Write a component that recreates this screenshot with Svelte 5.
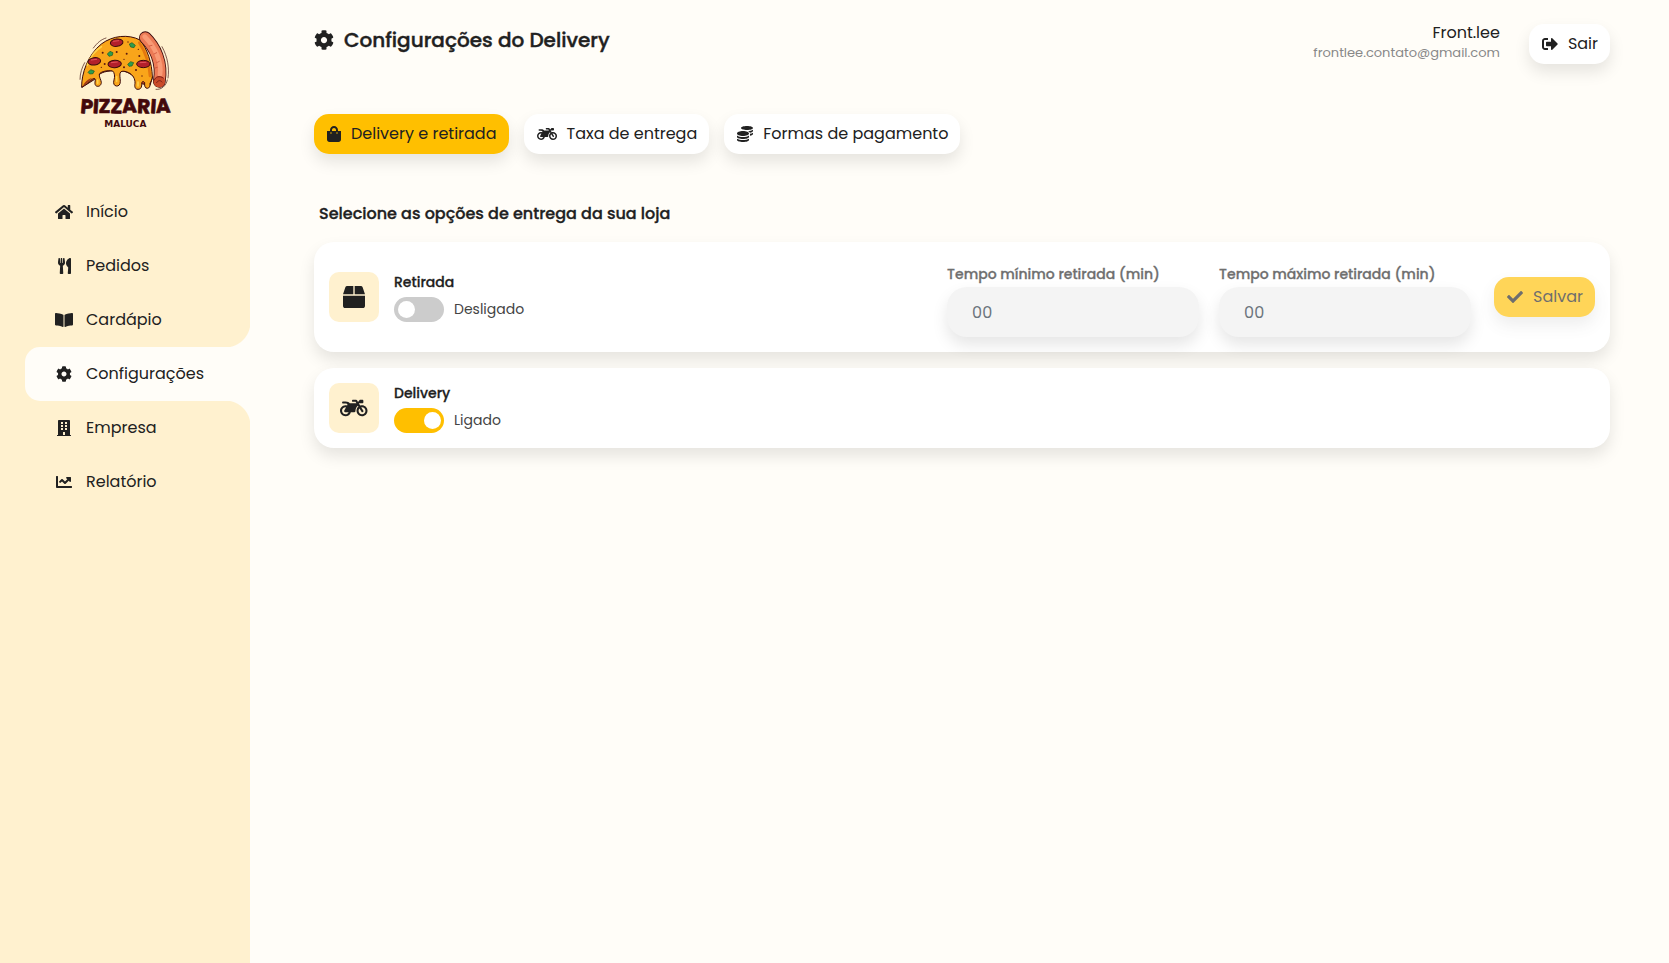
<script>
  const icons = {
    home: { w: 576, d: 'M280.37 148.26L96 300.11V464a16 16 0 0 0 16 16l112.06-.29a16 16 0 0 0 15.92-16V368a16 16 0 0 1 16-16h64a16 16 0 0 1 16 16v95.64a16 16 0 0 0 16 16.05L464 480a16 16 0 0 0 16-16V300L295.67 148.26a12.19 12.19 0 0 0-15.3 0zM571.6 251.47L488 182.56V44.05a12 12 0 0 0-12-12h-56a12 12 0 0 0-12 12v72.61L318.47 43a48 48 0 0 0-61 0L4.34 251.47a12 12 0 0 0-1.6 16.9l25.5 31A12 12 0 0 0 45.15 301l235.22-193.74a12.19 12.19 0 0 1 15.3 0L530.9 301a12 12 0 0 0 16.9-1.6l25.5-31a12 12 0 0 0-1.7-16.93z' },
    utensils: { w: 416, d: 'M207.9 15.2c.8 4.7 16.1 94.5 16.1 128.8 0 52.3-27.8 89.6-68.9 104.6L168 486.7c.7 13.7-10.2 25.3-24 25.3H80c-13.7 0-24.7-11.5-24-25.3l12.9-238.1C27.7 233.6 0 196.2 0 144 0 109.6 15.3 19.9 16.1 15.2 19.3-5.1 61.4-5.4 64 16.3v141.2c1.3 3.4 15.1 3.2 16 0 1.4-25.3 7.9-139.2 8-141.8 3.3-20.8 44.7-20.8 47.9 0 .2 2.7 6.6 116.5 8 141.8.9 3.2 14.8 3.4 16 0V16.3c2.6-21.6 44.8-21.4 48-1.1zm119.2 285.7l-15 185.1c-1.2 14 9.9 26 23.9 26h56c13.3 0 24-10.7 24-24V24c0-13.2-10.7-24-24-24-82.5 0-221.4 178.5-64.9 300.9z' },
    book: { w: 576, d: 'M542.22 32.05c-54.8 3.11-163.72 14.43-230.96 55.59-4.64 2.84-7.27 7.89-7.27 13.17v363.87c0 11.55 12.63 18.85 23.28 13.49 69.18-34.82 169.23-44.32 218.7-46.92 16.89-.89 30.02-14.43 30.02-30.66V62.75c.01-17.71-15.35-31.74-33.77-30.7zM264.73 87.64C197.5 46.48 88.58 35.17 33.78 32.05 15.36 31.01 0 45.04 0 62.75V400.6c0 16.24 13.13 29.78 30.02 30.66 49.49 2.6 149.59 12.11 218.77 46.95 10.62 5.35 23.21-1.94 23.21-13.46V100.63c0-5.29-2.62-10.14-7.27-12.99z' },
    cog: { w: 512, d: 'M487.4 315.7l-42.6-24.6c4.3-23.2 4.3-47 0-70.2l42.6-24.6c4.9-2.8 7.1-8.6 5.5-14-11.1-35.6-30-67.8-54.7-94.6-3.8-4.1-10-5.1-14.8-2.3L380.8 110c-17.9-15.4-38.5-27.3-60.8-35.1V25.8c0-5.6-3.9-10.5-9.4-11.7-36.7-8.2-74.3-7.8-109.2 0-5.5 1.2-9.4 6.1-9.4 11.7V75c-22.2 7.9-42.8 19.8-60.8 35.1L88.7 85.5c-4.9-2.8-11-1.9-14.8 2.3-24.7 26.7-43.6 58.9-54.7 94.6-1.7 5.4.6 11.2 5.5 14L67.3 221c-4.3 23.2-4.3 47 0 70.2l-42.6 24.6c-4.9 2.8-7.1 8.6-5.5 14 11.1 35.6 30 67.8 54.7 94.6 3.8 4.1 10 5.1 14.8 2.3l42.6-24.6c17.9 15.4 38.5 27.3 60.8 35.1v49.2c0 5.6 3.9 10.5 9.4 11.7 36.7 8.2 74.3 7.8 109.2 0 5.5-1.2 9.4-6.1 9.4-11.7v-49.2c22.2-7.9 42.8-19.8 60.8-35.1l42.6 24.6c4.9 2.8 11 1.9 14.8-2.3 24.7-26.7 43.6-58.9 54.7-94.6 1.5-5.5-.7-11.3-5.6-14.1zM256 336c-44.1 0-80-35.9-80-80s35.9-80 80-80 80 35.9 80 80-35.9 80-80 80z' },
    building: { w: 448, d: 'M436 480h-20V24c0-13.3-10.7-24-24-24H56C42.7 0 32 10.7 32 24v456H12c-6.6 0-12 5.4-12 12v20h448v-20c0-6.6-5.4-12-12-12zM128 76c0-6.6 5.4-12 12-12h40c6.6 0 12 5.4 12 12v40c0 6.6-5.4 12-12 12h-40c-6.6 0-12-5.4-12-12zm0 96c0-6.6 5.4-12 12-12h40c6.6 0 12 5.4 12 12v40c0 6.6-5.4 12-12 12h-40c-6.6 0-12-5.4-12-12zm52 148h-40c-6.6 0-12-5.4-12-12v-40c0-6.6 5.4-12 12-12h40c6.6 0 12 5.4 12 12v40c0 6.6-5.4 12-12 12zm76 160h-64v-84c0-6.6 5.4-12 12-12h40c6.6 0 12 5.4 12 12zm64-172c0 6.6-5.4 12-12 12h-40c-6.6 0-12-5.4-12-12v-40c0-6.6 5.4-12 12-12h40c6.6 0 12 5.4 12 12zm0-96c0 6.6-5.4 12-12 12h-40c-6.6 0-12-5.4-12-12v-40c0-6.6 5.4-12 12-12h40c6.6 0 12 5.4 12 12zm0-96c0 6.6-5.4 12-12 12h-40c-6.6 0-12-5.4-12-12V76c0-6.6 5.4-12 12-12h40c6.6 0 12 5.4 12 12z' },
    chart: { w: 512, d: 'M496 384H64V80c0-8.84-7.16-16-16-16H16C7.16 64 0 71.16 0 80v336c0 17.67 14.33 32 32 32h464c8.84 0 16-7.16 16-16v-32c0-8.84-7.16-16-16-16zM464 96H345.94c-21.38 0-32.09 25.85-16.97 40.97l32.4 32.4L288 242.75l-73.37-73.37c-12.5-12.5-32.76-12.5-45.25 0l-68.69 68.69c-6.25 6.25-6.25 16.38 0 22.63l22.62 22.62c6.25 6.25 16.38 6.25 22.63 0L192 237.25l73.37 73.37c12.5 12.5 32.76 12.5 45.25 0l96-96 32.4 32.4c15.12 15.12 40.97 4.41 40.97-16.97V112c.01-8.84-7.15-16-15.99-16z' },
    bag: { w: 448, d: 'M352 160v-32C352 57.42 294.579 0 224 0 153.42 0 96 57.42 96 128v32H0v272c0 44.183 35.817 80 80 80h288c44.183 0 80-35.817 80-80V160h-96zm-192-32c0-35.29 28.71-64 64-64s64 28.71 64 64v32H160v-32zm160 120c-13.255 0-24-10.745-24-24s10.745-24 24-24 24 10.745 24 24-10.745 24-24 24zm-192 0c-13.255 0-24-10.745-24-24s10.745-24 24-24 24 10.745 24 24-10.745 24-24 24z' },
    moto: { w: 640, d: 'M512.9 192c-14.9-.1-29.1 2.3-42.4 6.9L437.6 144H520c13.3 0 24-10.7 24-24V88c0-13.3-10.7-24-24-24h-45.3c-6.8 0-13.3 2.9-17.8 7.9l-37.5 41.7-22.8-38C392.2 68.4 384.4 64 376 64h-80c-8.8 0-16 7.2-16 16v16c0 8.8 7.2 16 16 16h66.4l19.2 32H227.9c-17.7-23.1-44.9-40-99.9-40H72.5C59 104 47.7 115 48 128.5c.2 13 10.9 23.5 24 23.5h56c24.5 0 38.7 10.9 47.8 24.8l-11.3 20.5c-13-3.9-26.9-5.7-41.3-5.2C55.9 194.5 1.6 249.6 0 317c-1.6 72.1 56.3 131 128 131 59.6 0 109.7-40.8 124-96h84.2c13.7 0 24.6-11.4 24-25.1-2.1-47.1 17.5-93.7 56.2-125l12.5 20.8c-27.6 23.7-45.1 58.9-44.8 98.2.5 69.6 57.2 126.5 126.8 127.1 71.6.7 129.8-57.5 129.2-129.1-.7-69.6-57.6-126.4-127.2-126.9zM128 400c-44.1 0-80-35.9-80-80s35.9-80 80-80c4.2 0 8.4.3 12.5 1L99 316.4c-8.8 16 2.8 35.6 21 35.6h81.3c-12.4 28.2-40.6 48-73.3 48zm463.9-75.6c-2.2 40.6-35 73.4-75.5 75.5-46.1 2.5-84.4-34.3-84.4-79.9 0-21.4 8.4-40.8 22.1-55.1l49.4 82.4c4.5 7.6 14.4 10 22 5.5l13.7-8.2c7.6-4.5 10-14.4 5.5-22l-48.6-80.9c5.2-1.1 10.5-1.6 15.9-1.6 45.6-.1 82.3 38.2 79.9 84.3z' },
    coins: { w: 512, d: 'M0 405.3V448c0 35.3 86 64 192 64s192-28.7 192-64v-42.7C342.7 434.4 267.2 448 192 448S41.3 434.4 0 405.3zM320 128c106 0 192-28.7 192-64S426 0 320 0 128 28.7 128 64s86 64 192 64zM0 300.4V352c0 35.3 86 64 192 64s192-28.7 192-64v-51.6c-41.3 34-116.9 51.6-192 51.6S41.3 334.4 0 300.4zm416 11c57.3-11.1 96-31.7 96-55.4v-42.7c-23.2 16.4-57.3 27.6-96 34.5v63.6zM192 160C86 160 0 195.8 0 240s86 80 192 80 192-35.8 192-80-86-80-192-80zm219.3 56.3c60-10.8 100.7-32 100.7-56.3v-42.7c-35.5 25.1-96.5 38.6-160.7 41.8 29.5 14.3 51.2 33.5 60 57.2z' },
    exit: { w: 512, d: 'M497 273L329 441c-15 15-41 4.5-41-17v-96H152c-13.3 0-24-10.7-24-24v-96c0-13.3 10.7-24 24-24h136V88c0-21.4 25.9-32 41-17l168 168c9.3 9.4 9.3 24.6 0 34zM192 436v-40c0-6.6-5.4-12-12-12H96c-17.7 0-32-14.3-32-32V160c0-17.7 14.3-32 32-32h84c6.6 0 12-5.4 12-12V76c0-6.6-5.4-12-12-12H96c-53 0-96 43-96 96v192c0 53 43 96 96 96h84c6.6 0 12-5.4 12-12z' },
    check: { w: 512, d: 'M173.898 439.404l-166.4-166.4c-9.997-9.997-9.997-26.206 0-36.204l36.203-36.204c9.997-9.998 26.207-9.998 36.204 0L192 312.69 432.095 72.596c9.997-9.997 26.207-9.997 36.204 0l36.203 36.204c9.997 9.997 9.997 26.206 0 36.204l-294.4 294.401c-9.998 9.997-26.207 9.997-36.204-.001z' },
    box: { w: 512, d: 'M509.5 184.6L458.9 32.8C452.4 13.2 434.1 0 413.4 0H272v192h238.7c-.4-2.5-.4-5-1.2-7.4zM240 0H98.6c-20.7 0-39 13.2-45.5 32.8L2.5 184.6c-.8 2.4-.8 4.9-1.2 7.4H240V0zM0 224v240c0 26.5 21.5 48 48 48h416c26.5 0 48-21.5 48-48V224H0z' }
  };

  const menu = [
    { label: 'Início', icon: 'home' },
    { label: 'Pedidos', icon: 'utensils' },
    { label: 'Cardápio', icon: 'book' },
    { label: 'Configurações', icon: 'cog', active: true },
    { label: 'Empresa', icon: 'building' },
    { label: 'Relatório', icon: 'chart' }
  ];

  const tabs = [
    { label: 'Delivery e retirada', icon: 'bag' },
    { label: 'Taxa de entrega', icon: 'moto' },
    { label: 'Formas de pagamento', icon: 'coins' }
  ];

  let activeTab = $state(0);
  let pickup = $state(false);
  let delivery = $state(true);
</script>

{#snippet icon(name)}
  <svg class="icon" viewBox="0 0 {icons[name].w} 512" aria-hidden="true"><path d={icons[name].d} /></svg>
{/snippet}

<div class="layout">
  <aside class="sidebar">
    <svg class="logo" viewBox="0 0 390 360" role="img" aria-label="Pizzaria Maluca">
      <g fill="none" stroke="#3b0a0c" stroke-width="2" stroke-linecap="round">
        <path d="M60 178C60 160 66 142 74 128M100 84C112 68 124 58 138 54" />
        <path d="M306 80C324 112 328 146 324 174M322 180C318 198 304 210 288 208" />
      </g>
      <path fill="#b8481f" stroke="#3b0a0c" stroke-width="3" stroke-linejoin="round"
        d="M66 202C70 164 96 148 120 146C150 138 200 138 232 152L278 170L270 196L238 190C218 158 190 148 160 152C132 154 118 158 104 178Z" />
      <path fill="#f9a51a" stroke="#3b0a0c" stroke-width="3" stroke-linejoin="round"
        d="M65 202C64 160 84 104 124 72C158 46 206 42 240 60C262 86 276 130 277 170C276 180 272 186 270 190C271 198 268 205 262 205C255 205 253 198 254 188C250 182 246 184 245 190C246 202 242 208 234 208C225 208 223 200 225 190C226 176 218 164 206 158C196 153 186 152 182 156C177 162 181 174 181 184C181 194 176 199 169 198C162 197 159 190 162 180C165 170 164 158 158 153C144 150 124 154 118 162C116 170 124 180 124 188C123 197 116 201 109 198C102 194 106 184 106 178C104 172 94 178 88 186Z" />
      <path fill="#a33c18" d="M68 200C72 188 82 178 96 174L86 186Z" />
      <path fill="none" stroke="#ffd24a" stroke-width="5" stroke-linecap="round"
        d="M82 136C92 108 106 90 124 80M170 170V184M234 186V198M113 180V190" />
      <path fill="none" stroke="#e5780f" stroke-width="8" stroke-linecap="round"
        d="M238 68C256 96 268 128 270 168" />
      <g fill="none" stroke-linecap="round">
        <path stroke="#3b0a0c" stroke-width="38" d="M256 53C284 80 308 126 298 184" />
        <path stroke="#ec7a55" stroke-width="33" d="M256 53C284 80 308 126 298 184" />
        <path stroke="#f99a75" stroke-width="14" d="M254 50C286 82 306 126 300 164" />
        <path stroke="#c2452f" stroke-width="2" d="M268 78L276 76M282 102L290 98M290 128L298 124M286 144L292 142" />
      </g>
      <circle cx="298" cy="185" r="17" fill="#c94a2a" />
      <path d="M283 180C286 170 298 166 310 174M290 188C294 180 302 180 306 186" fill="none" stroke="#7d1f16" stroke-width="3" stroke-linecap="round" />
      <g fill="#b31f2b" stroke="#3b0a0c" stroke-width="3">
        <ellipse cx="170" cy="68" rx="19" ry="11" transform="rotate(-8 170 68)" />
        <ellipse cx="103" cy="124" rx="19" ry="11" transform="rotate(-8 103 124)" />
        <ellipse cx="164" cy="132" rx="20" ry="11" transform="rotate(-4 164 132)" />
        <ellipse cx="250" cy="132" rx="20" ry="11" />
      </g>
      <path fill="none" stroke="#e0525a" stroke-width="3" stroke-linecap="round"
        d="M160 64L176 62M94 120L110 118M154 128L172 126M240 128L258 127" />
      <g fill="#2e9d4c" stroke="#17592b" stroke-width="2" stroke-linejoin="round">
        <path d="M142 102L150 94L159 98L157 106L147 109Z" />
        <path d="M208 72L216 68L226 76L222 83L212 81Z" />
        <path d="M203 133L212 125L221 128L216 138L207 139Z" />
        <path d="M84 157L92 149L103 153L99 161L89 162Z" />
      </g>
      <g fill="#5c1a10">
        <circle cx="170" cy="96" r="3" /><circle cx="200" cy="101" r="3" /><circle cx="128" cy="98" r="3" />
        <circle cx="192" cy="118" r="2" /><circle cx="235" cy="88" r="2" /><circle cx="134" cy="132" r="3" />
        <circle cx="238" cy="108" r="3" /><circle cx="192" cy="142" r="3" /><circle cx="228" cy="150" r="3" />
        <circle cx="124" cy="142" r="2" /><circle cx="204" cy="66" r="2" /><circle cx="246" cy="168" r="2" />
      </g>
      <text class="brand" x="196" y="279" text-anchor="middle" rotate="5 4 0 3 -3 2 4 -2">PIZZARIA</text>
      <text class="brand-sub" x="196" y="321" text-anchor="middle">MALUCA</text>
    </svg>

    <nav class="menu" aria-label="Menu principal">
      {#each menu as item}
        <a href="#top" class="menu-item" class:active={item.active} aria-current={item.active ? 'page' : undefined}>
          <span class="menu-icon">{@render icon(item.icon)}</span>
          {item.label}
        </a>
      {/each}
    </nav>
  </aside>

  <main class="content">
    <header class="header">
      <h1 class="title bold">{@render icon('cog')}Configurações do Delivery</h1>
      <div class="user">
        <span class="user-name">Front.lee</span>
        <span class="user-mail">frontlee.contato@gmail.com</span>
      </div>
      <button class="btn" type="button">{@render icon('exit')}Sair</button>
    </header>

    <div class="tabs">
      {#each tabs as tab, i}
        <button class="btn" class:primary={activeTab === i} type="button" onclick={() => (activeTab = i)}>
          {@render icon(tab.icon)}{tab.label}
        </button>
      {/each}
    </div>

    <h2 class="subtitle bold">Selecione as opções de entrega da sua loja</h2>

    <section class="cards">
      <div class="card">
        <div class="card-icon">{@render icon('box')}</div>
        <div class="info">
          <p class="info-title bold">Retirada</p>
          <label class="switch">
            <input type="checkbox" bind:checked={pickup} />
            {pickup ? 'Ligado' : 'Desligado'}
          </label>
        </div>
        <div class="times" class:off={!pickup}>
          <div class="field">
            <label class="bold" for="min-time">Tempo mínimo retirada (min)</label>
            <input id="min-time" type="text" placeholder="00" disabled={!pickup} />
          </div>
          <div class="field">
            <label class="bold" for="max-time">Tempo máximo retirada (min)</label>
            <input id="max-time" type="text" placeholder="00" disabled={!pickup} />
          </div>
        </div>
        <button class="btn primary" type="button" disabled={!pickup}>{@render icon('check')}Salvar</button>
      </div>

      <div class="card">
        <div class="card-icon">{@render icon('moto')}</div>
        <div class="info">
          <p class="info-title bold">Delivery</p>
          <label class="switch">
            <input type="checkbox" bind:checked={delivery} />
            {delivery ? 'Ligado' : 'Desligado'}
          </label>
        </div>
      </div>
    </section>
  </main>
</div>

<style>
  :global(body) {
    margin: 0;
    background: #fffdf8;
  }

  .layout {
    --ink: #212121;
    --cream: #fff1cf;
    --page: #fffdf8;
    --accent: #ffbf00;
    --shadow: 0 8px 16px rgba(0, 0, 0, 0.1);
    display: flex;
    min-height: 100vh;
    color: var(--ink);
    background: var(--page);
    font: 16px/24px Poppins, Montserrat, 'Open Sans', sans-serif;
  }

  .layout * {
    box-sizing: border-box;
  }

  h1,
  h2,
  p {
    margin: 0;
  }

  /* Medium letterforms, slightly thickened. */
  .bold {
    font-weight: 500;
    -webkit-text-stroke: 0.02em currentColor;
  }

  .icon {
    height: 1em;
    flex: none;
    fill: currentColor;
  }

  .sidebar {
    flex: none;
    width: 250px;
    padding-top: 20px;
    background: var(--cream);
  }

  .logo {
    display: block;
    width: 130px;
    margin: 0 auto;
  }

  .brand {
    font: 700 60px Poppins, sans-serif;
    fill: #43090b;
    stroke: #43090b;
    stroke-width: 2;
    stroke-linejoin: round;
  }

  .brand-sub {
    font: 700 27px 'DejaVu Sans', sans-serif;
    fill: #43090b;
  }

  .menu {
    display: flex;
    flex-direction: column;
    margin-top: 45px;
    padding-left: 25px;
  }

  .menu-item {
    position: relative;
    display: flex;
    align-items: center;
    gap: 12px;
    height: 54px;
    padding-left: 29px;
    border-radius: 15px 0 0 15px;
    color: inherit;
    text-decoration: none;
  }

  .menu-icon {
    display: flex;
    justify-content: center;
    width: 20px;
  }

  .menu-item.active {
    background: var(--page);
  }

  .menu-item.active::before,
  .menu-item.active::after {
    content: '';
    position: absolute;
    right: 0;
    width: 25px;
    height: 25px;
  }

  .menu-item.active::before {
    bottom: 100%;
    background: radial-gradient(circle at 0 0, var(--cream) 25px, var(--page) 26px);
  }

  .menu-item.active::after {
    top: 100%;
    background: radial-gradient(circle at 0 100%, var(--cream) 25px, var(--page) 26px);
  }

  .content {
    flex: 1;
    min-width: 0;
    padding: 22px 59px 40px 64px;
  }

  .header {
    display: flex;
    align-items: flex-start;
    min-height: 44px;
  }

  .title {
    display: flex;
    align-items: center;
    gap: 10px;
    margin-right: auto;
    font-size: 20px;
    line-height: 36px;
  }

  .user {
    display: flex;
    flex-direction: column;
    padding-top: 1px;
    margin-right: 29px;
    line-height: 20px;
    text-align: right;
  }

  .user-mail {
    font-size: 13px;
    color: #888;
  }

  .btn {
    display: flex;
    align-items: center;
    gap: 10px;
    height: 40px;
    padding: 0 12px 0 13px;
    border: 0;
    border-radius: 15px;
    color: var(--ink);
    background: #fff;
    box-shadow: var(--shadow);
    font: inherit;
    white-space: nowrap;
    cursor: pointer;
  }

  .btn.primary {
    background: var(--accent);
  }

  .btn:disabled {
    opacity: 0.65;
    cursor: default;
  }

  .header .btn {
    align-self: center;
  }

  .tabs {
    display: flex;
    flex-wrap: wrap;
    gap: 15px;
    margin-top: 48px;
  }

  .subtitle {
    margin-top: 48px;
    padding-left: 5px;
    font-size: 16px;
  }

  .cards {
    display: flex;
    flex-direction: column;
    gap: 16px;
    margin-top: 16px;
  }

  .card {
    display: flex;
    align-items: center;
    gap: 15px;
    padding: 15px;
    border-radius: 20px;
    background: #fff;
    box-shadow: var(--shadow);
  }

  .card-icon {
    display: grid;
    place-items: center;
    width: 50px;
    height: 50px;
    border-radius: 10px;
    background: var(--cream);
    font-size: 22px;
  }

  .info {
    display: flex;
    flex-direction: column;
    gap: 4px;
    font-size: 14px;
    line-height: 21px;
  }

  .switch {
    display: flex;
    align-items: center;
    gap: 10px;
    color: #444;
  }

  .switch input {
    appearance: none;
    width: 50px;
    height: 25px;
    margin: 0;
    padding: 4px 3px 4px 4px;
    border-radius: 13px;
    background: #ccc;
    cursor: pointer;
  }

  .switch input::before {
    content: '';
    display: block;
    width: 17px;
    height: 17px;
    border-radius: 50%;
    background: #fff;
  }

  .switch input:checked {
    background: var(--accent);
  }

  .switch input:checked::before {
    margin-left: auto;
  }

  .times {
    display: flex;
    gap: 20px;
    margin-left: auto;
    margin-right: 8px;
  }

  .field label {
    display: block;
    padding-top: 4px;
    font-size: 14px;
    line-height: 26px;
  }

  .field input {
    display: block;
    width: 252px;
    height: 50px;
    padding: 0 25px;
    border: 0;
    border-radius: 20px;
    color: var(--ink);
    background: #f4f4f4;
    box-shadow: var(--shadow);
    font: inherit;
  }

  .field input::placeholder {
    color: #6c757d;
    opacity: 1;
  }

  .off label {
    color: #6f6f6f;
  }
</style>
